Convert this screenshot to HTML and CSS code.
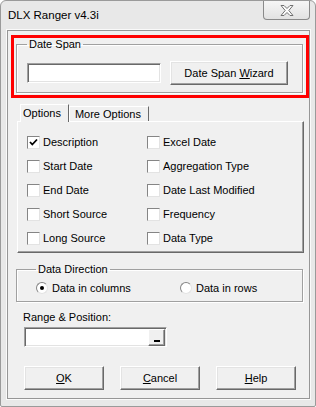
FILE: index.html
```html
<!DOCTYPE html>
<html lang="en">
<head>
  <meta charset="UTF-8">
  <meta name="viewport" content="width=device-width, initial-scale=1.0">
  <title>DLX Ranger v4.3i</title>
  <link rel="stylesheet" href="styles.css">
</head>
<body>

<div class="window">
  <div class="titlebar">
    <span class="title">DLX Ranger v4.3i</span>
    <button class="close" aria-label="Close">
      <svg width="14" height="11" viewBox="0 0 14 11"><polygon points="1,0.5 4,0.5 7,3.5 10,0.5 13,0.5 8.8,5.5 13,10.5 10,10.5 7,7.5 4,10.5 1,10.5 5.2,5.5" fill="#fdfdfd" stroke="#707070" stroke-width="1"/></svg>
    </button>
  </div>

  <div class="client">
    <div class="highlight">
      <fieldset class="group span-group">
        <legend>Date Span</legend>
        <div class="span-row">
          <div class="textbox span-input"></div>
          <button class="btn wizard">Date Span <u>W</u>izard</button>
        </div>
      </fieldset>
    </div>

    <div class="tabs">
      <div class="tab-strip">
        <span class="tab active">Options</span>
        <span class="tab">More Options</span>
      </div>
      <div class="tab-panel">
        <label class="check"><span class="box checked"><svg width="11" height="11" viewBox="0 0 11 11"><polyline points="2,5 4.3,7.5 9,2.5" fill="none" stroke="#000" stroke-width="1.8"/></svg></span>Description</label>
        <label class="check"><span class="box"></span>Excel Date</label>
        <label class="check"><span class="box"></span>Start Date</label>
        <label class="check"><span class="box"></span>Aggregation Type</label>
        <label class="check"><span class="box"></span>End Date</label>
        <label class="check"><span class="box"></span>Date Last Modified</label>
        <label class="check"><span class="box"></span>Short Source</label>
        <label class="check"><span class="box"></span>Frequency</label>
        <label class="check"><span class="box"></span>Long Source</label>
        <label class="check"><span class="box"></span>Data Type</label>
      </div>
    </div>

    <fieldset class="group direction">
      <legend>Data Direction</legend>
      <div class="radio-row">
        <label class="option cols"><span class="radio selected"></span>Data in columns</label>
        <label class="option"><span class="radio"></span>Data in rows</label>
      </div>
    </fieldset>

    <div class="range-label">Range &amp; Position:</div>
    <div class="textbox range-box"><button class="pick"><span class="bar"></span></button></div>

    <div class="actions">
      <button class="btn"><u>O</u>K</button>
      <button class="btn"><u>C</u>ancel</button>
      <button class="btn"><u>H</u>elp</button>
    </div>
  </div>
</div>

</body>
</html>
```

FILE: styles.css
```css
body { margin: 0; background: #fff; font-family: "Liberation Sans", Arial, sans-serif; font-size: 11px; color: #000; }
.window { width: 316px; height: 407px; box-sizing: border-box; border: 1px solid #9a9a9a; border-radius: 6px 6px 2px 2px; background: #e8e8e8; padding: 0 5px 7px 6px; display: flex; flex-direction: column; }
.titlebar { height: 29px; flex-shrink: 0; display: flex; justify-content: space-between; align-items: flex-start; }
.title { margin: 7px 0 0 1px; font-size: 11.5px; line-height: 15px; }
.close { width: 47px; height: 19px; box-sizing: border-box; padding: 0; border: 1px solid #8a8a8a; border-top: none; border-radius: 0 0 4px 4px; background: linear-gradient(#f6f6f6, #e2e2e2); display: flex; align-items: center; justify-content: center; }
.client { flex: 1; border: 1px solid #969696; background: #f0f0f0; box-shadow: 0 0 0 1px #fafafa; display: flex; flex-direction: column; }

.highlight { margin: 4px 0 0 3px; border: 3px solid #f00; padding: 0 3px 2px 2px; }
.group { margin: 0; border: 1px solid #a0a0a0; box-shadow: inset 1px 1px 0 #fff, 1px 1px 0 #fff; }
.group legend { padding: 0 2px; line-height: 13px; }
.span-group { padding: 10px 0 7px 10px; }
.span-row { display: flex; align-items: center; gap: 9px; }

.textbox { box-sizing: border-box; background: #fff; border: 1px solid; border-color: #a0a0a0 #fff #fff #a0a0a0; box-shadow: inset 1px 1px 0 #696969, inset -1px -1px 0 #e3e3e3; }
.span-input { width: 134px; height: 20px; }

.btn { box-sizing: border-box; height: 24px; padding: 0; font: inherit; color: #000; background: #f0f0f0; border: 1px solid; border-color: #fff #696969 #696969 #fff; box-shadow: inset -1px -1px 0 #a0a0a0, inset 1px 1px 0 #e3e3e3; }
.wizard { width: 118px; }

.tabs { margin: 6px 5px 0 9px; }
.tab-strip { display: flex; align-items: flex-end; padding-left: 3px; }
.tab { box-sizing: border-box; border: 1px solid; border-color: #fff #696969 transparent #fff; border-bottom: none; line-height: 14px; background: #f0f0f0; }
.tab.active { position: relative; z-index: 1; height: 18px; margin-bottom: -1px; padding: 1px 7px 0 2px; }
.tab:not(.active) { height: 15px; padding: 0 7px 0 5px; }
.tab-panel { display: grid; grid-template-columns: 120px 1fr; grid-auto-rows: 24px; padding: 8px 0 2px 9px; border: 1px solid; border-color: #fff #696969 #696969 #fff; box-shadow: inset -1px -1px 0 #a0a0a0; }

.check { display: flex; align-items: center; gap: 3px; }
.box { width: 13px; height: 13px; box-sizing: border-box; background: #fff; border: 1px solid; border-color: #858585 #e3e3e3 #e3e3e3 #858585; display: flex; align-items: center; justify-content: center; }

.direction { margin: 10px 6px 0 8px; padding: 5px 0 6px 19px; }
.radio-row { display: flex; height: 14px; align-items: center; }
.option { display: flex; align-items: center; gap: 4px; }
.option.cols { width: 144px; }
.radio { width: 12px; height: 12px; box-sizing: border-box; border-radius: 50%; background: #fff; border: 1px solid; border-color: #858585 #e3e3e3 #e3e3e3 #858585; display: flex; align-items: center; justify-content: center; }
.radio.selected::after { content: ""; width: 4px; height: 4px; border-radius: 50%; background: #000; }

.range-label { margin: 9px 0 0 15px; line-height: 13px; }
.range-box { margin: 3px 0 0 16px; width: 143px; height: 20px; display: flex; justify-content: flex-end; padding: 1px; }
.pick { box-sizing: border-box; width: 17px; height: 17px; padding: 0; background: #f0f0f0; border: 1px solid; border-color: #fff #696969 #696969 #fff; box-shadow: inset -1px -1px 0 #a0a0a0; display: flex; align-items: flex-end; justify-content: center; }
.bar { width: 6px; height: 2px; background: #000; margin-bottom: 3px; }

.actions { display: flex; gap: 16px; margin: 19px 0 0 16px; }
.actions .btn { width: 80px; }
```
